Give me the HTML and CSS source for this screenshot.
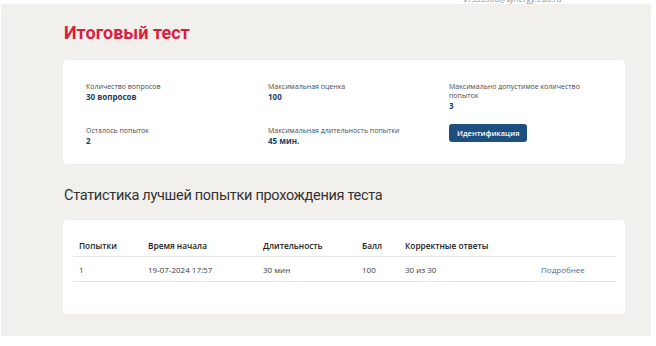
FILE: index.html
```html
<!DOCTYPE html>
<html lang="ru">

<head>
    <meta charset="UTF-8">
    <meta name="viewport" content="width=device-width, initial-scale=1.0">
    <title>Итоговый тест</title>
    <link rel="stylesheet" href="styles.css">
</head>

<body>
    <div class="topbar">
        <span class="email">s1555566@synergy.edu.ru</span>
    </div>

    <div class="page">
        <h1 class="title">Итоговый тест</h1>

        <!-- Информация о тесте -->
        <div class="card info">
            <div class="item">
                <div class="label">Количество вопросов</div>
                <div class="value">30 вопросов</div>
            </div>
            <div class="item">
                <div class="label">Максимальная оценка</div>
                <div class="value">100</div>
            </div>
            <div class="item">
                <div class="label">Максимально допустимое количество попыток</div>
                <div class="value">3</div>
            </div>
            <div class="item">
                <div class="label">Осталось попыток</div>
                <div class="value">2</div>
            </div>
            <div class="item">
                <div class="label">Максимальная длительность попытки</div>
                <div class="value">45 мин.</div>
            </div>
            <div class="item">
                <button class="btn">Идентификация</button>
            </div>
        </div>

        <h2 class="subtitle">Статистика лучшей попытки прохождения теста</h2>

        <!-- Статистика -->
        <div class="card stats">
            <table>
                <thead>
                    <tr>
                        <th class="c1">Попытки</th>
                        <th class="c2">Время начала</th>
                        <th class="c3">Длительность</th>
                        <th class="c4">Балл</th>
                        <th class="c5">Корректные ответы</th>
                        <th></th>
                    </tr>
                </thead>
                <tbody>
                    <tr>
                        <td>1</td>
                        <td>19-07-2024 17:57</td>
                        <td>30 мин</td>
                        <td>100</td>
                        <td>30 из 30</td>
                        <td><a href="#" class="more">Подробнее</a></td>
                    </tr>
                </tbody>
            </table>
        </div>
    </div>
</body>

</html>
```

FILE: styles.css
```css
body {
    margin: 0;
    width: 656px;
    height: 346px;
    background-color: #ffffff;
    font-family: "Open Sans", "Noto Sans", sans-serif;
    color: #333;
    overflow: hidden;
}

.topbar {
    height: 4px;
    overflow: hidden;
    display: flex;
    align-items: flex-end;
    padding-left: 463px;
}

.email {
    font-size: 8px;
    line-height: 10px;
    color: #8a8f99;
    flex-shrink: 0;
}

.page {
    margin: 0 5px 0 1px;
    height: 332px;
    background-color: #f2f0ed;
    padding: 16px 26px 0 62px;
    box-sizing: border-box;
}

.title {
    margin: 0 0 15px 1px;
    font-family: Roboto, "Open Sans", sans-serif;
    font-size: 18px;
    line-height: 25px;
    font-weight: 700;
    color: #d81e3f;
}

.card {
    background-color: #ffffff;
    border-radius: 3px;
    box-shadow: 0 0 1px rgba(0, 0, 0, 0.08);
}

.info {
    height: 104px;
    box-sizing: border-box;
    padding: 22px 20px 0 23px;
    display: grid;
    grid-template-columns: 182px 181px 150px;
    grid-template-rows: 44px 38px;
}

.label {
    font-size: 7px;
    line-height: 9px;
    color: #4a4a4a;
}

.value {
    font-size: 8px;
    line-height: 11px;
    font-weight: 700;
    color: #1f3d66;
}

.btn {
    display: block;
    margin-top: -2px;
    padding: 0 8px;
    height: 18px;
    border: none;
    border-radius: 3px;
    background-color: #1d4f80;
    color: #ffffff;
    font-family: inherit;
    font-size: 7.5px;
    font-weight: 600;
}

.subtitle {
    margin: 20px 0 0 1px;
    font-family: Roboto, "Open Sans", sans-serif;
    font-size: 14.5px;
    line-height: 24px;
    font-weight: 400;
    letter-spacing: -0.3px;
    color: #333;
}

.stats {
    margin-top: 12px;
    height: 94px;
    padding: 15px 9px 0 10px;
    box-sizing: border-box;
}

table {
    width: 100%;
    border-collapse: collapse;
    font-size: 8px;
    line-height: 11px;
}

th {
    text-align: left;
    font-size: 8.3px;
    font-weight: 600;
    color: #222;
    padding: 5px 0 5px 6px;
    border-bottom: 1px solid #e6e6e6;
}

td {
    padding: 7px 0 6px 6px;
    color: #3a3a3a;
    border-bottom: 1px solid #e6e6e6;
}

.c1 { width: 63px; }
.c2 { width: 109px; }
.c3 { width: 93px; }
.c4 { width: 37px; }
.c5 { width: 130px; }

.more {
    color: #4a6d95;
    text-decoration: none;
}
```
